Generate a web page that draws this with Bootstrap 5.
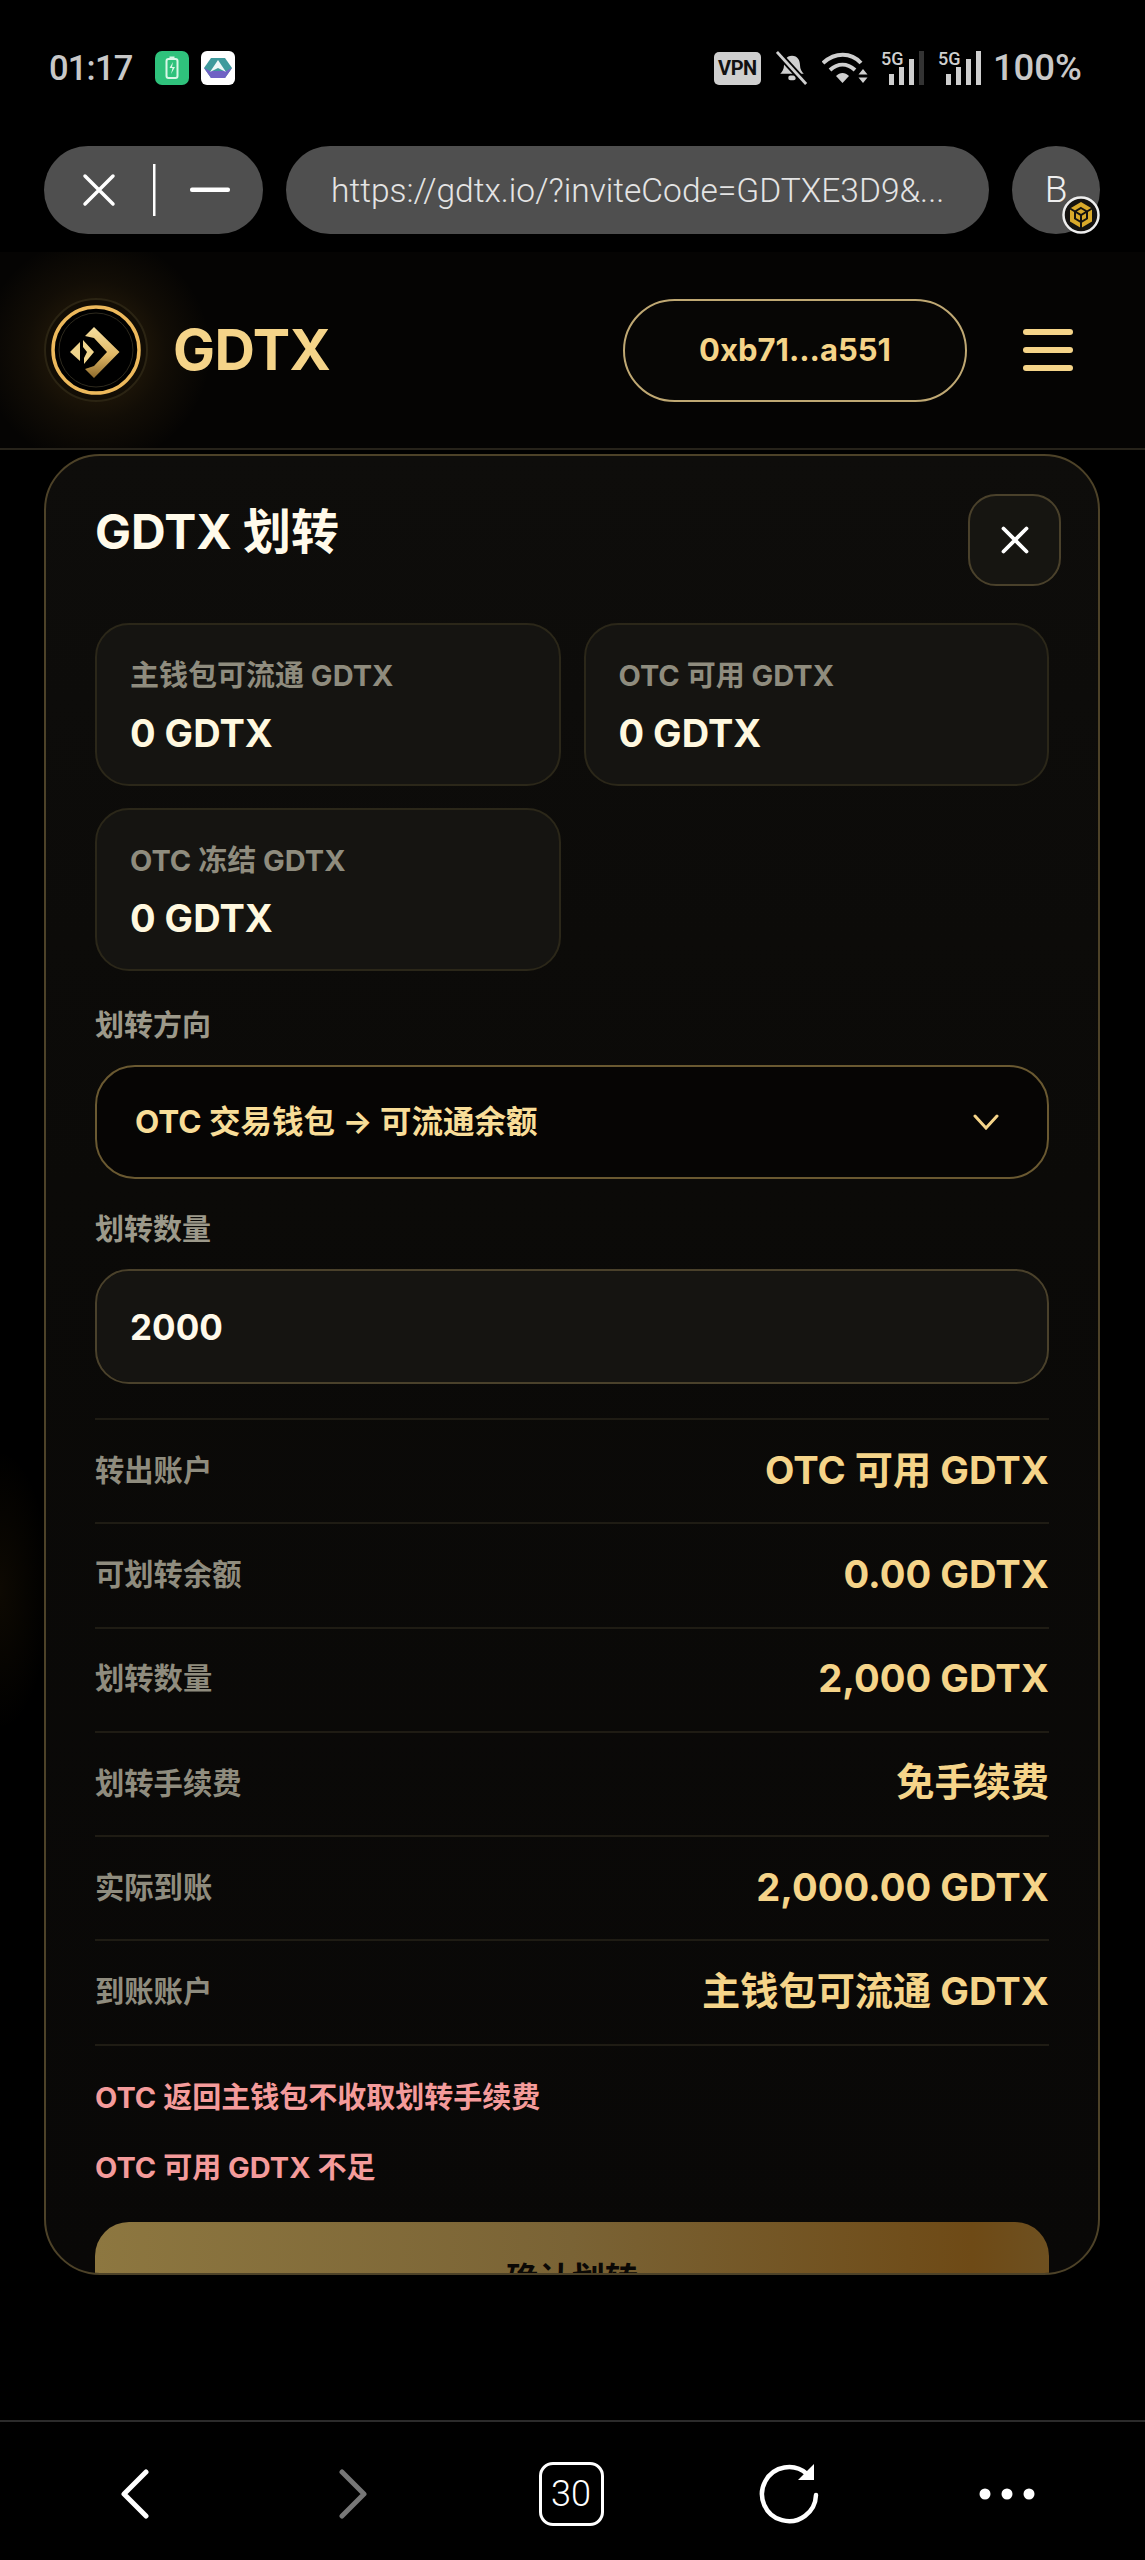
<!DOCTYPE html>
<html lang="zh-CN">
<head>
<meta charset="utf-8">
<title>GDTX 划转</title>
<link href="https://cdn.jsdelivr.net/npm/bootstrap@5.3.0/dist/css/bootstrap.min.css" rel="stylesheet">
<style>
html,body{background:#000;}
body{width:1145px;height:2560px;overflow:hidden;font-family:Inter,"Noto Sans CJK SC",sans-serif;color:#fff;}
.sys-bar{height:136px;padding:0 63px 0 49px;color:#c8c8c8;font-family:Roboto,"Liberation Sans",sans-serif;font-weight:500;}
.sys-time{font-size:34.5px;line-height:1;width:106px;letter-spacing:-.8px;}
.sys-pct{font-size:36.5px;line-height:1;margin-left:11px;}
.vpn-tag{width:47px;height:33px;background:#cfcfcf;color:#111;border-radius:5px;font-size:20px;font-weight:700;margin-right:15px;letter-spacing:-.5px;}
.wifi-ico{margin-left:14px;}
.sig-ico{margin-left:13px;overflow:visible;}
.browser-bar{height:88px;padding:0 45px 0 44px;margin-top:10px;margin-bottom:18px;gap:23px;}
.pill-ctl{width:219px;height:88px;background:#4f4f4f;border-radius:44px;flex:none;}
.pill-url{flex:1 1 auto;height:88px;background:#4f4f4f;border-radius:44px;color:#e4e4e4;font-family:Roboto,sans-serif;font-weight:300;font-size:33.5px;padding:2px 0 0 45px;white-space:nowrap;overflow:hidden;}
.pill-tab{position:relative;width:88px;height:88px;background:#4f4f4f;border-radius:50%;flex:none;font-family:Roboto,sans-serif;font-weight:300;font-size:37px;color:#eee;}
.tab-badge{position:absolute;left:50px;top:50px;}
.app-head{height:198px;padding:0 72px 0 41px;background:radial-gradient(circle at 96px 99px,rgba(224,160,50,.20) 0,rgba(224,160,50,.06) 70px,rgba(0,0,0,0) 115px),#050403;border-bottom:2px solid #27231a;}
.brand-word{font-size:56px;font-weight:700;color:#f5d489;line-height:1;margin-left:22px;letter-spacing:-.5px;}
.addr-btn{width:344px;height:103px;border:2px solid #bfa873;border-radius:52px;background:#070605;color:#f5d489;font-size:31px;font-weight:700;margin-left:auto;margin-right:56px;padding:0;}
.addr-btn:hover,.addr-btn:active{background:#070605;color:#f5d489;border-color:#bfa873;}
.menu-bars{width:50px;gap:12px;}
.menu-bars span{height:6px;border-radius:3px;background:#f5d489;}
.page-main{height:1970px;padding:4px 45px 0 44px;background:radial-gradient(ellipse 50px 140px at 0 1140px,rgba(190,130,30,.07),rgba(0,0,0,0) 100%),#000;}
.xfer-panel{height:1821px;overflow:hidden;border:2px solid #4d4228;border-radius:56px;padding:38px 49px 0;background:linear-gradient(180deg,#0e0d0b 0,#0b0a08 40%,#090807 100%);}
.panel-top{height:92px;}
.panel-title{font-size:48px;font-weight:700;color:#fffaea;line-height:60px;margin:8px 0 0;}
.close-x{width:93px;height:92px;border-radius:28px;border:2px solid #4a412b;background:#161511;margin-right:-12px;padding:0;}
.close-x:hover,.close-x:active{background:#161511;border-color:#4a412b;}
.stat-grid{--bs-gutter-x:23px;--bs-gutter-y:22px;margin-top:15px;}
.stat-tile{height:163px;background:#151411;border:2px solid #2b2719;border-radius:34px;padding:31px 33px 0;}
.stat-name{font-size:29px;font-weight:700;color:#8f8c7e;line-height:40px;}
.stat-num{font-size:38px;font-weight:700;color:#fff8df;line-height:50px;margin-top:12px;}
.fld-label{display:block;font-size:29px;font-weight:700;color:#9c998a;line-height:40px;margin:0 0 19px;}
.fld-first{margin-top:35px;}
.fld-next{margin-top:31px;}
.form-select.dir-select{height:114px;background-color:#060504;border:2px solid #6a5931;border-radius:40px;color:#f8dd98;font-size:31.5px;font-weight:700;padding:0 90px 0 38px;background-position:right 48px center;background-size:26px 16px;background-image:url("data:image/svg+xml,%3Csvg xmlns='http://www.w3.org/2000/svg' viewBox='0 0 26 16'%3E%3Cpath fill='none' stroke='%23f5d489' stroke-width='3' stroke-linecap='round' d='M2 2l11 12L24 2'/%3E%3C/svg%3E");}
.form-control.amt-input{height:115px;background-color:#151411;border:2px solid #4a412b;border-radius:34px;color:#fff9ea;font-size:35px;font-weight:700;padding:0 33px;}
.kv-list{margin-top:34px;border-top:2px solid #1f1c14;}
.kv-row{height:104.3px;border-bottom:2px solid #1f1c14;}
.kv-key{font-size:29.3px;font-weight:700;color:#8f8c7e;margin-top:-1px;}
.kv-val{font-size:38.2px;font-weight:700;color:#f5d489;margin-top:-2px;}
.warn-line{font-size:29px;font-weight:700;color:#f49b9b;line-height:40px;margin:0;}
.warn-a{margin-top:32px;}
.warn-b{margin-top:30px;}
.go-btn{height:115px;margin-top:34px;border:0;border-radius:34px;background:linear-gradient(90deg,#8d7740 0,#7a6335 50%,#6e4a16 92%,#6e5020 100%);color:#0a0805;font-size:33px;font-weight:700;}
.go-btn:hover,.go-btn:active{background:linear-gradient(90deg,#8d7740 0,#7a6335 50%,#6e4a16 92%,#6e5020 100%);color:#0a0805;}
.foot-bar{height:140px;border-top:2px solid #2b2b2b;background:#000;padding:6px 0 0 26px;}
.foot-bar svg{display:block;}
.foot-cell{width:218px;}
.tab-count{width:65px;height:64px;border:3.5px solid #fff;border-radius:14px;font-family:Roboto,sans-serif;font-weight:300;font-size:36px;color:#fff;line-height:1;}
</style>
</head>
<body>
<div class="sys-bar d-flex align-items-center">
  <span class="sys-time">01:17</span>
  <svg width="34" height="34" viewBox="0 0 34 34" class="me-2"><rect width="34" height="34" rx="7" fill="#2fc27c"/><rect x="11.500" y="8" width="11" height="19" rx="2" fill="none" stroke="#d9f7e8" stroke-width="2"/><rect x="14.500" y="5.500" width="5" height="2.500" fill="#d9f7e8"/><path d="M18 11l-3.500 6h3l-1.500 6 4-7h-3z" fill="#d9f7e8"/></svg>
  <svg width="34" height="34" viewBox="0 0 34 34" class="ms-1"><rect width="34" height="34" rx="6" fill="#fff"/><path d="M10 7h14l7 10-7 10H10L3 17z" fill="#3f9a9d"/><path d="M3 17l7 10h14l7-10-6 3H9z" fill="#6f62c4"/><path d="M17 9l8 12-8-4-8 4z" fill="#eef7f8"/></svg>
  <div class="ms-auto d-flex align-items-center">
    <span class="vpn-tag d-flex align-items-center justify-content-center">VPN</span>
    <svg width="32" height="34" viewBox="0 0 34 34"><path d="M17 4c-6 0-8.500 5-8.500 10 0 4-2 7-4 9h25c-2-2-4-5-4-9 0-5-2.500-10-8.500-10z" fill="#cfcfcf"/><rect x="13" y="25" width="8" height="5" rx="2.500" fill="#cfcfcf"/><path d="M1 0l31 34" stroke="#000" stroke-width="7"/><path d="M1 0l31 34" stroke="#cfcfcf" stroke-width="3"/></svg>
    <svg width="46" height="34" viewBox="0 0 46 34" class="wifi-ico"><path d="M1 12c12-11 28-11 38 0M8 19c8-7 17-7 25 0" fill="none" stroke="#cfcfcf" stroke-width="4"/><path d="M14 25c4-4 9-4 13 0l-6.500 7z" fill="#cfcfcf"/><path d="M41 18l4.500 5.500h-9zM41 32l4.500-5.500h-9z" fill="#cfcfcf"/></svg>
    <svg width="44" height="34" viewBox="0 0 44 34" class="sig-ico"><text x="0" y="14" font-family="Roboto" font-weight="500" font-size="18" fill="#cfcfcf">5G</text><rect x="8" y="23" width="5" height="11" fill="#cfcfcf"/><rect x="18" y="16" width="5" height="18" fill="#cfcfcf"/><rect x="28" y="8" width="5" height="26" fill="#cfcfcf"/><rect x="38" y="0" width="5" height="34" fill="#333"/></svg>
    <svg width="44" height="34" viewBox="0 0 44 34" class="sig-ico"><text x="0" y="14" font-family="Roboto" font-weight="500" font-size="18" fill="#cfcfcf">5G</text><rect x="8" y="23" width="5" height="11" fill="#cfcfcf"/><rect x="18" y="16" width="5" height="18" fill="#cfcfcf"/><rect x="28" y="8" width="5" height="26" fill="#cfcfcf"/><rect x="38" y="0" width="5" height="34" fill="#cfcfcf"/></svg>
    <span class="sys-pct">100%</span>
  </div>
</div>

<div class="browser-bar d-flex align-items-center">
  <div class="pill-ctl d-flex align-items-center justify-content-center">
    <svg width="154" height="52" viewBox="0 0 154 52"><path d="M8 12l28 28M36 12L8 40" stroke="#fff" stroke-width="3.500" fill="none" stroke-linecap="round"/><rect x="76" y="0" width="2.500" height="52" fill="#fff"/><rect x="113" y="23.500" width="40" height="4.500" rx="2" fill="#fff"/></svg>
  </div>
  <div class="pill-url d-flex align-items-center">https://gdtx.io/?inviteCode=GDTXE3D9&amp;...</div>
  <div class="pill-tab d-flex align-items-center justify-content-center">B
    <svg class="tab-badge" width="38" height="38" viewBox="0 0 38 38"><circle cx="19" cy="19" r="17.500" fill="#141210" stroke="#eee" stroke-width="2.500"/><path d="M19 6l11 6.500v13L19 32 8 25.500v-13z" fill="#d9a92a"/><path d="M19 12l6 3.500v7L19 26l-6-3.500v-7zM8 12.500L19 19l11-6.500M19 19v13" fill="none" stroke="#141210" stroke-width="2"/></svg>
  </div>
</div>

<header class="app-head d-flex align-items-center">
  <svg width="110" height="110" viewBox="0 0 110 110">
    <defs><linearGradient id="gd" x1="0" y1="0" x2="0" y2="1"><stop offset="0" stop-color="#f7e0a0"/><stop offset=".55" stop-color="#e0b765"/><stop offset="1" stop-color="#8d6a2c"/></linearGradient></defs>
    <circle cx="55" cy="55" r="51" fill="#120d05" stroke="#2b2413" stroke-width="2"/>
    <circle cx="55" cy="55" r="43" fill="#000" stroke="#edb95c" stroke-width="3.500"/>
    <circle cx="55" cy="55" r="37" fill="none" stroke="#2e2a1e" stroke-width="1"/>
    <path d="M29 57l10-10v19z" fill="#f0d48c"/>
    <path d="M44 41l9-9 25.500 25L53 83l-9-9 9-3 13-14-13-14z" fill="url(#gd)"/>
    <path d="M42 45l11 12-10 12v-6l3-6-4-5z" fill="#f2d68e"/>
  </svg>
  <span class="brand-word">GDTX</span>
  <button type="button" class="btn addr-btn">0xb71...a551</button>
  <div class="menu-bars d-flex flex-column"><span></span><span></span><span></span></div>
</header>

<main class="page-main">
  <section class="xfer-panel">
    <div class="panel-top d-flex justify-content-between align-items-start">
      <h1 class="panel-title">GDTX 划转</h1>
      <button type="button" class="btn close-x d-flex align-items-center justify-content-center" aria-label="关闭">
        <svg width="28" height="28" viewBox="0 0 28 28"><path d="M2.500 2.500l23 23M25.500 2.500l-23 23" stroke="#fff" stroke-width="3.800" stroke-linecap="round"/></svg>
      </button>
    </div>
    <div class="row stat-grid">
      <div class="col-6"><div class="stat-tile"><div class="stat-name">主钱包可流通 GDTX</div><div class="stat-num">0 GDTX</div></div></div>
      <div class="col-6"><div class="stat-tile"><div class="stat-name">OTC 可用 GDTX</div><div class="stat-num">0 GDTX</div></div></div>
      <div class="col-6"><div class="stat-tile"><div class="stat-name">OTC 冻结 GDTX</div><div class="stat-num">0 GDTX</div></div></div>
    </div>
    <label class="fld-label fld-first">划转方向</label>
    <select class="form-select dir-select"><option>OTC 交易钱包 → 可流通余额</option></select>
    <label class="fld-label fld-next">划转数量</label>
    <input class="form-control amt-input" type="text" value="2000">
    <div class="kv-list">
      <div class="kv-row d-flex justify-content-between align-items-center"><span class="kv-key">转出账户</span><span class="kv-val">OTC 可用 GDTX</span></div>
      <div class="kv-row d-flex justify-content-between align-items-center"><span class="kv-key">可划转余额</span><span class="kv-val">0.00 GDTX</span></div>
      <div class="kv-row d-flex justify-content-between align-items-center"><span class="kv-key">划转数量</span><span class="kv-val">2,000 GDTX</span></div>
      <div class="kv-row d-flex justify-content-between align-items-center"><span class="kv-key">划转手续费</span><span class="kv-val">免手续费</span></div>
      <div class="kv-row d-flex justify-content-between align-items-center"><span class="kv-key">实际到账</span><span class="kv-val">2,000.00 GDTX</span></div>
      <div class="kv-row d-flex justify-content-between align-items-center"><span class="kv-key">到账账户</span><span class="kv-val">主钱包可流通 GDTX</span></div>
    </div>
    <p class="warn-line warn-a">OTC 返回主钱包不收取划转手续费</p>
    <p class="warn-line warn-b">OTC 可用 GDTX 不足</p>
    <button type="button" class="btn go-btn w-100">确认划转</button>
  </section>
</main>

<nav class="foot-bar d-flex align-items-center">
  <div class="foot-cell d-flex justify-content-center"><svg width="30" height="50" viewBox="0 0 30 50"><path d="M26 3L4 25l22 22" fill="none" stroke="#fff" stroke-width="5" stroke-linecap="round" stroke-linejoin="round"/></svg></div>
  <div class="foot-cell d-flex justify-content-center"><svg width="30" height="50" viewBox="0 0 30 50"><path d="M4 3l22 22L4 47" fill="none" stroke="#777" stroke-width="5" stroke-linecap="round" stroke-linejoin="round"/></svg></div>
  <div class="foot-cell d-flex justify-content-center"><div class="tab-count d-flex align-items-center justify-content-center">30</div></div>
  <div class="foot-cell d-flex justify-content-center"><svg width="60" height="62" viewBox="0 0 60 62"><path d="M57 32a27 27 0 1 1-9-21" fill="none" stroke="#fff" stroke-width="4.500" stroke-linecap="round"/><path d="M55 1v16H39z" fill="#fff"/></svg></div>
  <div class="foot-cell d-flex justify-content-center"><svg width="56" height="12" viewBox="0 0 56 12"><circle cx="6" cy="6" r="5.500" fill="#fff"/><circle cx="28" cy="6" r="5.500" fill="#fff"/><circle cx="50" cy="6" r="5.500" fill="#fff"/></svg></div>
</nav>
<script src="https://cdn.jsdelivr.net/npm/bootstrap@5.3.0/dist/js/bootstrap.bundle.min.js"></script>
</body>
</html>
